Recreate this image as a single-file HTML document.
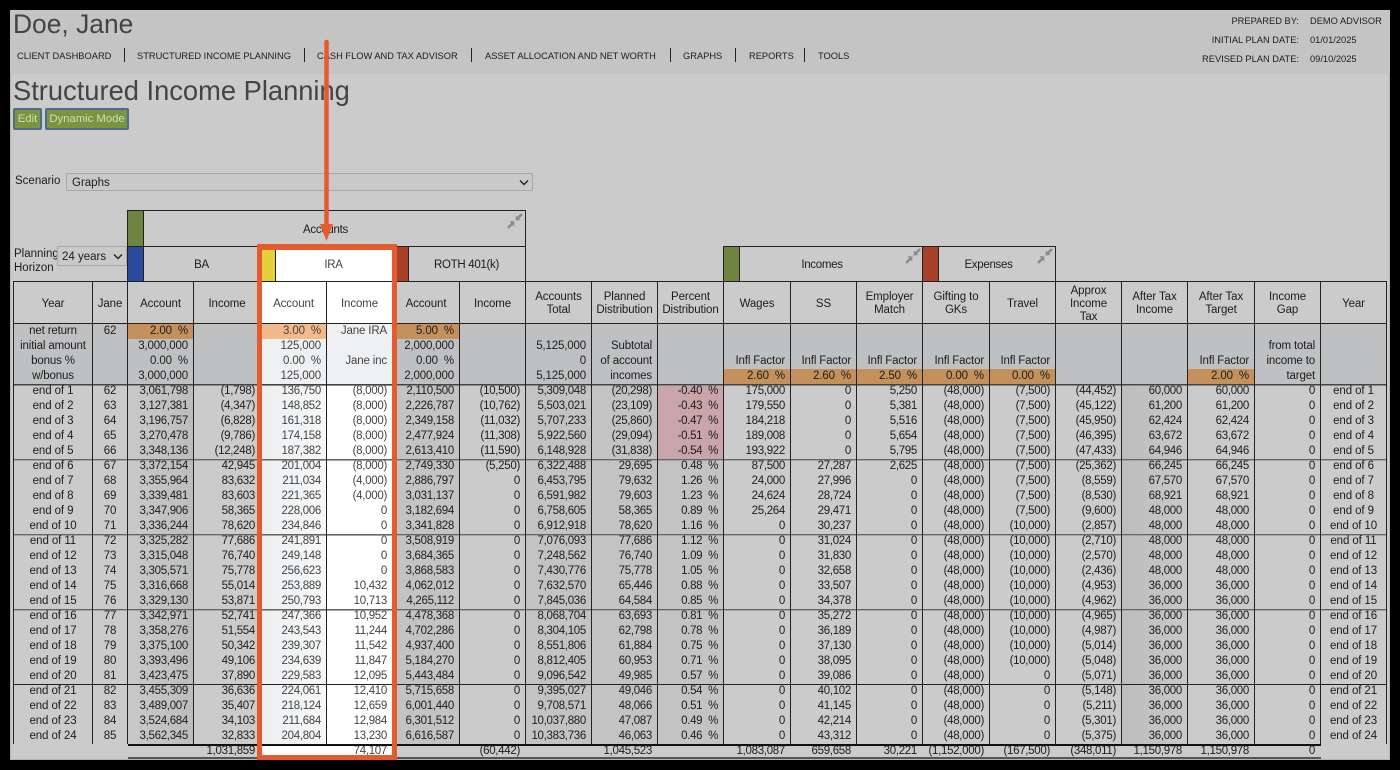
<!DOCTYPE html>
<html><head><meta charset="utf-8"><title>Structured Income Planning</title>
<style>
html,body{margin:0;padding:0;background:#000;}
body{width:1400px;height:770px;overflow:hidden;position:relative;font-family:"Liberation Sans",sans-serif;color:#1c1c1c;font-size:11.5px;letter-spacing:-.3px}
.a{position:absolute;white-space:nowrap}
#pg{position:absolute;left:10px;top:10px;width:1380px;height:750px;background:#cbcbcb;box-shadow:inset 0 0 0 1px #b5b5b5}
#band{position:absolute;left:10px;top:10px;width:1380px;height:64px;background:#c4c4c4}
.nav{font-size:9.3px;letter-spacing:0;top:50px;line-height:13px;color:#1c1c1c}
.sep{position:absolute;top:48px;height:14px;width:1px;background:#222}
.r{font-size:9.3px;letter-spacing:0;line-height:12px;color:#1c1c1c}
.btn{top:108px;height:18px;line-height:18px;background:#7a9440;border:2px solid #4d6c94;border-radius:2px;color:#d3dcb8;text-align:center;font-size:11.3px;letter-spacing:0}
.sel{background:#c9c9c9;border:1px solid #a8a8a8;box-sizing:border-box;border-radius:1px}
.box{position:absolute;box-sizing:border-box;border:1px solid #222;border-right-width:1px;text-align:center}
.st{position:absolute;top:0;bottom:0;left:0}
table{position:absolute;left:13px;top:281px;border-collapse:separate;border-spacing:0;table-layout:fixed;width:1374px}
td{padding:0 5px 0 0;height:15px;line-height:15px;text-align:right;box-sizing:border-box;border-right:1px solid #222;white-space:nowrap;overflow:hidden;background:#cbcbcb}
td:first-child{border-left:1px solid #222}
td:nth-child(1),td:nth-child(2),td:nth-child(21){text-align:center;padding:0;letter-spacing:-.1px}
tr.h td{height:43px;text-align:center;padding:2px 0 0;line-height:13px;letter-spacing:-.1px;border-top:1px solid #222;box-shadow:inset 0 -1px 0 #222;color:#1c1c1c}
tr.h td:nth-child(5),tr.h td:nth-child(6){background:#fff;color:#444}
tr.p td{background:#bfc0c2;letter-spacing:-.15px}
tr.p td:nth-child(5),tr.p td:nth-child(6){background:#eff0f2;color:#444}
tr.d td:nth-child(3){background:linear-gradient(90deg,#c9c9c9,#bcbdbe)}
tr.d td:nth-child(7),tr.d td:nth-child(9),tr.d td:nth-child(10),tr.d td:nth-child(11){background:#c3c3c4}
tr.d td:nth-child(18){background:linear-gradient(90deg,#bcbdbe,#c8c8c8)}
tr.d td:nth-child(5){background:linear-gradient(90deg,#eceef0,#f6f7f8);color:#444}
tr.d td:nth-child(6){background:#fff;color:#444}
tr.f td{box-shadow:inset 0 1px 0 #444,inset 0 2px 0 #888}
tr.g td{box-shadow:inset 0 1px 0 #666,inset 0 2px 0 #a5a5a5}
tr.k td{box-shadow:inset 0 1px 0 #222}
td.o{background:#c4915c!important;color:#1c1c1c}
td.l{background:#f2b98a!important}
td.n{background:#c9a4a8!important}
tr.t td{border:0;background:transparent;line-height:15px;height:15px;padding-right:6px}
tr.t td.b{border-top:2px solid #111;border-bottom:2px solid #555;line-height:11px}
tr.t td.w{background:#fff;color:#444}
#bx{position:absolute;left:257px;top:244px;width:140px;height:516px;box-sizing:border-box;border:5px solid #e35b2f;border-top-width:6px}
</style></head><body>
<div id="pg"></div><div id="band"></div>
<div class="a" style="left:13px;top:8px;font-size:26.4px;line-height:32px;letter-spacing:0;color:#444">Doe, Jane</div>
<div class="a nav" style="left:17px">CLIENT DASHBOARD</div><div class="sep" style="left:124px"></div>
<div class="a nav" style="left:137px">STRUCTURED INCOME PLANNING</div><div class="sep" style="left:304px"></div>
<div class="a nav" style="left:317px">CASH FLOW AND TAX ADVISOR</div><div class="sep" style="left:471px"></div>
<div class="a nav" style="left:485px">ASSET ALLOCATION AND NET WORTH</div><div class="sep" style="left:670px"></div>
<div class="a nav" style="left:683px">GRAPHS</div><div class="sep" style="left:735px"></div>
<div class="a nav" style="left:749px">REPORTS</div><div class="sep" style="left:804px"></div>
<div class="a nav" style="left:818px">TOOLS</div>
<div class="a r" style="right:101px;top:15px">PREPARED BY:</div><div class="a r" style="left:1310px;top:15px">DEMO ADVISOR</div>
<div class="a r" style="right:101px;top:34px">INITIAL PLAN DATE:</div><div class="a r" style="left:1310px;top:34px">01/01/2025</div>
<div class="a r" style="right:101px;top:53px">REVISED PLAN DATE:</div><div class="a r" style="left:1310px;top:53px">09/10/2025</div>
<div class="a" style="left:13px;top:74px;font-size:27.3px;line-height:34px;letter-spacing:0;color:#444">Structured Income Planning</div>
<div class="a btn" style="left:13px;width:25px">Edit</div>
<div class="a btn" style="left:45px;width:80px">Dynamic Mode</div>
<div class="a" style="left:15px;top:174px;line-height:15px;letter-spacing:0">Scenario</div>
<div class="a sel" style="left:66px;top:173px;width:467px;height:18px;line-height:18px;padding-left:5px;letter-spacing:0">Graphs
<svg style="position:absolute;right:3px;top:5px" width="10" height="8"><path d="M1 1.5L5 5.5L9 1.5" fill="none" stroke="#222" stroke-width="1.4"/></svg></div>
<div class="a" style="left:14px;top:247px;line-height:14px;letter-spacing:0">Planning<br>Horizon</div>
<div class="a sel" style="left:57px;top:246px;width:70px;height:20px;line-height:20px;padding-left:4px;letter-spacing:0">24 years
<svg style="position:absolute;right:3px;top:6px" width="10" height="8"><path d="M1 1.5L5 5.5L9 1.5" fill="none" stroke="#222" stroke-width="1.4"/></svg></div>

<div class="box" style="left:127px;top:210px;width:399px;height:37px;line-height:38px;padding-left:0"><div class="st" style="width:15px;background:#6f8440;border-right:1px solid #222"></div><span style="position:absolute;left:0;right:2px;top:0;text-align:center">Accounts</span>
<svg style="position:absolute;left:379px;top:2px" width="16" height="16"><path d="M1 15L6 10M15 1L10 6" stroke="#8c8c8c" stroke-width="2.6"/><path d="M7.5 8.5L2.5 8L7 13.5ZM8.5 7.5L9 2.5L13.5 7Z" fill="#8c8c8c"/></svg></div>
<div class="box" style="left:127px;top:246px;width:134px;height:36px;line-height:37px"><div class="st" style="width:15px;background:#2a4a9e;border-right:1px solid #222"></div><span style="position:absolute;left:15px;right:0">BA</span></div>
<div class="a" style="left:262px;top:250px;width:130px;height:32px;background:#fff;border-bottom:1px solid #222;box-sizing:border-box"><div class="st" style="width:13px;background:#e6d03a;border-right:1px solid #222"></div><span style="position:absolute;left:13px;right:0;text-align:center;line-height:30px;color:#444">IRA</span></div>
<div class="box" style="left:392px;top:246px;width:134px;height:36px;line-height:37px"><div class="st" style="width:15px;background:#a9402a;border-right:1px solid #222"></div><span style="position:absolute;left:15px;right:0">ROTH 401(k)</span></div>
<div class="box" style="left:723px;top:246px;width:200px;height:36px;line-height:37px"><div class="st" style="width:15px;background:#6f8440;border-right:1px solid #222"></div><span style="position:absolute;left:0;right:2px;text-align:center">Incomes</span>
<svg style="position:absolute;left:181px;top:1px" width="16" height="16"><path d="M1 15L6 10M15 1L10 6" stroke="#8c8c8c" stroke-width="2.6"/><path d="M7.5 8.5L2.5 8L7 13.5ZM8.5 7.5L9 2.5L13.5 7Z" fill="#8c8c8c"/></svg></div>
<div class="box" style="left:922px;top:246px;width:134px;height:36px;line-height:37px"><div class="st" style="width:15px;background:#a9402a;border-right:1px solid #222"></div><span style="position:absolute;left:0;right:1px;text-align:center">Expenses</span>
<svg style="position:absolute;left:114px;top:1px" width="16" height="16"><path d="M1 15L6 10M15 1L10 6" stroke="#8c8c8c" stroke-width="2.6"/><path d="M7.5 8.5L2.5 8L7 13.5ZM8.5 7.5L9 2.5L13.5 7Z" fill="#8c8c8c"/></svg></div>

<table>
<colgroup><col style="width:80px"><col style="width:35px"><col style="width:66px"><col style="width:67px"><col style="width:66px"><col style="width:66px"><col style="width:67px"><col style="width:66px"><col style="width:66px"><col style="width:66px"><col style="width:66px"><col style="width:67px"><col style="width:66px"><col style="width:66px"><col style="width:67px"><col style="width:66px"><col style="width:66px"><col style="width:66px"><col style="width:67px"><col style="width:66px"><col style="width:66px"></colgroup>
<tr class="h"><td>Year<td>Jane<td>Account<td>Income<td>Account<td>Income<td>Account<td>Income<td>Accounts<br>Total<td>Planned<br>Distribution<td>Percent<br>Distribution<td>Wages<td>SS<td>Employer<br>Match<td>Gifting to<br>GKs<td>Travel<td>Approx<br>Income<br>Tax<td>After Tax<br>Income<td>After Tax<br>Target<td>Income<br>Gap<td>Year</tr>
<tr class="p"><td>net return<td>62<td class="o">2.00&nbsp;&nbsp;%<td><td class="l">3.00&nbsp;&nbsp;%<td>Jane IRA<td class="o">5.00&nbsp;&nbsp;%<td><td><td><td><td><td><td><td><td><td><td><td><td><td></tr>
<tr class="p"><td>initial amount<td><td>3,000,000<td><td>125,000<td><td>2,000,000<td><td>5,125,000<td>Subtotal<td><td><td><td><td><td><td><td><td><td>from total<td></tr>
<tr class="p"><td>bonus %<td><td>0.00&nbsp;&nbsp;%<td><td>0.00&nbsp;&nbsp;%<td>Jane inc<td>0.00&nbsp;&nbsp;%<td><td>0<td>of account<td><td>Infl Factor<td>Infl Factor<td>Infl Factor<td>Infl Factor<td>Infl Factor<td><td><td>Infl Factor<td>income to<td></tr>
<tr class="p"><td>w/bonus<td><td>3,000,000<td><td>125,000<td><td>2,000,000<td><td>5,125,000<td>incomes<td><td class="o">2.60&nbsp;&nbsp;%<td class="o">2.60&nbsp;&nbsp;%<td class="o">2.50&nbsp;&nbsp;%<td class="o">0.00&nbsp;&nbsp;%<td class="o">0.00&nbsp;&nbsp;%<td><td><td class="o">2.00&nbsp;&nbsp;%<td>target<td></tr>
<tr class="d f"><td>end of 1<td>62<td>3,061,798<td>(1,798)<td>136,750<td>(8,000)<td>2,110,500<td>(10,500)<td>5,309,048<td>(20,298)<td class="n">-0.40&nbsp;&nbsp;%<td>175,000<td>0<td>5,250<td>(48,000)<td>(7,500)<td>(44,452)<td>60,000<td>60,000<td>0<td>end of 1</tr>
<tr class="d"><td>end of 2<td>63<td>3,127,381<td>(4,347)<td>148,852<td>(8,000)<td>2,226,787<td>(10,762)<td>5,503,021<td>(23,109)<td class="n">-0.43&nbsp;&nbsp;%<td>179,550<td>0<td>5,381<td>(48,000)<td>(7,500)<td>(45,122)<td>61,200<td>61,200<td>0<td>end of 2</tr>
<tr class="d"><td>end of 3<td>64<td>3,196,757<td>(6,828)<td>161,318<td>(8,000)<td>2,349,158<td>(11,032)<td>5,707,233<td>(25,860)<td class="n">-0.47&nbsp;&nbsp;%<td>184,218<td>0<td>5,516<td>(48,000)<td>(7,500)<td>(45,950)<td>62,424<td>62,424<td>0<td>end of 3</tr>
<tr class="d"><td>end of 4<td>65<td>3,270,478<td>(9,786)<td>174,158<td>(8,000)<td>2,477,924<td>(11,308)<td>5,922,560<td>(29,094)<td class="n">-0.51&nbsp;&nbsp;%<td>189,008<td>0<td>5,654<td>(48,000)<td>(7,500)<td>(46,395)<td>63,672<td>63,672<td>0<td>end of 4</tr>
<tr class="d"><td>end of 5<td>66<td>3,348,136<td>(12,248)<td>187,382<td>(8,000)<td>2,613,410<td>(11,590)<td>6,148,928<td>(31,838)<td class="n">-0.54&nbsp;&nbsp;%<td>193,922<td>0<td>5,795<td>(48,000)<td>(7,500)<td>(47,433)<td>64,946<td>64,946<td>0<td>end of 5</tr>
<tr class="d g"><td>end of 6<td>67<td>3,372,154<td>42,945<td>201,004<td>(8,000)<td>2,749,330<td>(5,250)<td>6,322,488<td>29,695<td>0.48&nbsp;&nbsp;%<td>87,500<td>27,287<td>2,625<td>(48,000)<td>(7,500)<td>(25,362)<td>66,245<td>66,245<td>0<td>end of 6</tr>
<tr class="d"><td>end of 7<td>68<td>3,355,964<td>83,632<td>211,034<td>(4,000)<td>2,886,797<td>0<td>6,453,795<td>79,632<td>1.26&nbsp;&nbsp;%<td>24,000<td>27,996<td>0<td>(48,000)<td>(7,500)<td>(8,559)<td>67,570<td>67,570<td>0<td>end of 7</tr>
<tr class="d"><td>end of 8<td>69<td>3,339,481<td>83,603<td>221,365<td>(4,000)<td>3,031,137<td>0<td>6,591,982<td>79,603<td>1.23&nbsp;&nbsp;%<td>24,624<td>28,724<td>0<td>(48,000)<td>(7,500)<td>(8,530)<td>68,921<td>68,921<td>0<td>end of 8</tr>
<tr class="d"><td>end of 9<td>70<td>3,347,906<td>58,365<td>228,006<td>0<td>3,182,694<td>0<td>6,758,605<td>58,365<td>0.89&nbsp;&nbsp;%<td>25,264<td>29,471<td>0<td>(48,000)<td>(7,500)<td>(9,600)<td>48,000<td>48,000<td>0<td>end of 9</tr>
<tr class="d"><td>end of 10<td>71<td>3,336,244<td>78,620<td>234,846<td>0<td>3,341,828<td>0<td>6,912,918<td>78,620<td>1.16&nbsp;&nbsp;%<td>0<td>30,237<td>0<td>(48,000)<td>(10,000)<td>(2,857)<td>48,000<td>48,000<td>0<td>end of 10</tr>
<tr class="d g"><td>end of 11<td>72<td>3,325,282<td>77,686<td>241,891<td>0<td>3,508,919<td>0<td>7,076,093<td>77,686<td>1.12&nbsp;&nbsp;%<td>0<td>31,024<td>0<td>(48,000)<td>(10,000)<td>(2,710)<td>48,000<td>48,000<td>0<td>end of 11</tr>
<tr class="d"><td>end of 12<td>73<td>3,315,048<td>76,740<td>249,148<td>0<td>3,684,365<td>0<td>7,248,562<td>76,740<td>1.09&nbsp;&nbsp;%<td>0<td>31,830<td>0<td>(48,000)<td>(10,000)<td>(2,570)<td>48,000<td>48,000<td>0<td>end of 12</tr>
<tr class="d"><td>end of 13<td>74<td>3,305,571<td>75,778<td>256,623<td>0<td>3,868,583<td>0<td>7,430,776<td>75,778<td>1.05&nbsp;&nbsp;%<td>0<td>32,658<td>0<td>(48,000)<td>(10,000)<td>(2,436)<td>48,000<td>48,000<td>0<td>end of 13</tr>
<tr class="d"><td>end of 14<td>75<td>3,316,668<td>55,014<td>253,889<td>10,432<td>4,062,012<td>0<td>7,632,570<td>65,446<td>0.88&nbsp;&nbsp;%<td>0<td>33,507<td>0<td>(48,000)<td>(10,000)<td>(4,953)<td>36,000<td>36,000<td>0<td>end of 14</tr>
<tr class="d"><td>end of 15<td>76<td>3,329,130<td>53,871<td>250,793<td>10,713<td>4,265,112<td>0<td>7,845,036<td>64,584<td>0.85&nbsp;&nbsp;%<td>0<td>34,378<td>0<td>(48,000)<td>(10,000)<td>(4,962)<td>36,000<td>36,000<td>0<td>end of 15</tr>
<tr class="d g"><td>end of 16<td>77<td>3,342,971<td>52,741<td>247,366<td>10,952<td>4,478,368<td>0<td>8,068,704<td>63,693<td>0.81&nbsp;&nbsp;%<td>0<td>35,272<td>0<td>(48,000)<td>(10,000)<td>(4,965)<td>36,000<td>36,000<td>0<td>end of 16</tr>
<tr class="d"><td>end of 17<td>78<td>3,358,276<td>51,554<td>243,543<td>11,244<td>4,702,286<td>0<td>8,304,105<td>62,798<td>0.78&nbsp;&nbsp;%<td>0<td>36,189<td>0<td>(48,000)<td>(10,000)<td>(4,987)<td>36,000<td>36,000<td>0<td>end of 17</tr>
<tr class="d"><td>end of 18<td>79<td>3,375,100<td>50,342<td>239,307<td>11,542<td>4,937,400<td>0<td>8,551,806<td>61,884<td>0.75&nbsp;&nbsp;%<td>0<td>37,130<td>0<td>(48,000)<td>(10,000)<td>(5,014)<td>36,000<td>36,000<td>0<td>end of 18</tr>
<tr class="d"><td>end of 19<td>80<td>3,393,496<td>49,106<td>234,639<td>11,847<td>5,184,270<td>0<td>8,812,405<td>60,953<td>0.71&nbsp;&nbsp;%<td>0<td>38,095<td>0<td>(48,000)<td>(10,000)<td>(5,048)<td>36,000<td>36,000<td>0<td>end of 19</tr>
<tr class="d"><td>end of 20<td>81<td>3,423,475<td>37,890<td>229,583<td>12,095<td>5,443,484<td>0<td>9,096,542<td>49,985<td>0.57&nbsp;&nbsp;%<td>0<td>39,086<td>0<td>(48,000)<td>0<td>(5,071)<td>36,000<td>36,000<td>0<td>end of 20</tr>
<tr class="d k"><td>end of 21<td>82<td>3,455,309<td>36,636<td>224,061<td>12,410<td>5,715,658<td>0<td>9,395,027<td>49,046<td>0.54&nbsp;&nbsp;%<td>0<td>40,102<td>0<td>(48,000)<td>0<td>(5,148)<td>36,000<td>36,000<td>0<td>end of 21</tr>
<tr class="d"><td>end of 22<td>83<td>3,489,007<td>35,407<td>218,124<td>12,659<td>6,001,440<td>0<td>9,708,571<td>48,066<td>0.51&nbsp;&nbsp;%<td>0<td>41,145<td>0<td>(48,000)<td>0<td>(5,211)<td>36,000<td>36,000<td>0<td>end of 22</tr>
<tr class="d"><td>end of 23<td>84<td>3,524,684<td>34,103<td>211,684<td>12,984<td>6,301,512<td>0<td>10,037,880<td>47,087<td>0.49&nbsp;&nbsp;%<td>0<td>42,214<td>0<td>(48,000)<td>0<td>(5,301)<td>36,000<td>36,000<td>0<td>end of 23</tr>
<tr class="d"><td>end of 24<td>85<td>3,562,345<td>32,833<td>204,804<td>13,230<td>6,616,587<td>0<td>10,383,736<td>46,063<td>0.46&nbsp;&nbsp;%<td>0<td>43,312<td>0<td>(48,000)<td>0<td>(5,375)<td>36,000<td>36,000<td>0<td>end of 24</tr>
<tr class="t"><td><td><td class="b"><td class="b">1,031,859<td class="b w"><td class="b w">74,107<td class="b"><td class="b">(60,442)<td class="b"><td class="b">1,045,523<td class="b"><td class="b">1,083,087<td class="b">659,658<td class="b">30,221<td class="b">(1,152,000)<td class="b">(167,500)<td class="b">(348,011)<td class="b">1,150,978<td class="b">1,150,978<td class="b">0<td></tr>
</table>
<div id="bx"></div>
<svg class="a" style="left:318px;top:38px" width="18" height="206"><path d="M8.5 4V188" stroke="#e35b2f" stroke-width="4.5" stroke-linecap="round"/><path d="M2 186H15L8.5 203Z" fill="#e35b2f"/></svg>
</body></html>
